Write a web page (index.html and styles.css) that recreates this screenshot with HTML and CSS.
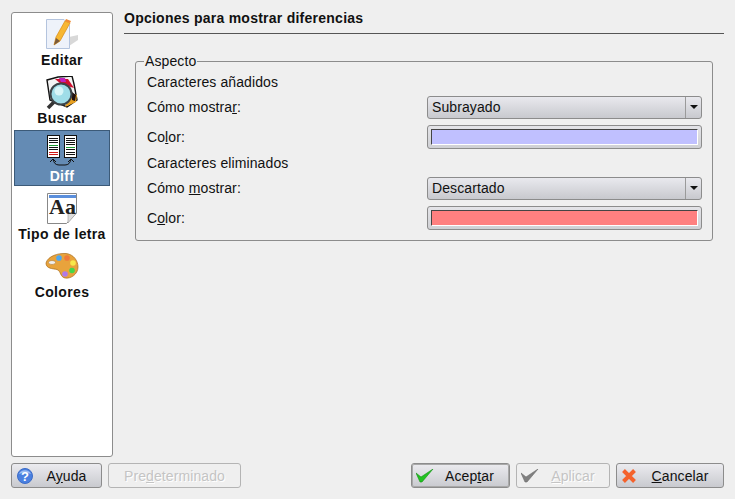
FILE: index.html
```html
<!DOCTYPE html>
<html lang="es">
<head>
  <meta charset="UTF-8" />
  <title>Opciones para mostrar diferencias</title>
  <link rel="stylesheet" href="styles.css">
</head>
<body>
  <div class="window">
    <div class="main">
      <ul class="sidebar">
        <li class="nav-item">
          <svg class="nav-icon" width="34" height="34" viewBox="0 0 34 34">
            <path d="M24 19 L33 17 L33 22 L24 28Z" fill="#d8d8d8"/>
            <path d="M1.500 1.500 H19 L24.500 7 V30.500 H1.500Z" fill="#eef2fa" stroke="#b4c4de"/>
            <path d="M11 19 L20 3 L25 5 L15 23 L9 27Z" fill="#f7b733" stroke="#d98a12" stroke-width=".7"/>
            <path d="M20 3 L21 1 L26 3 L25 5Z" fill="#f08a30"/>
            <path d="M9 27 L11 20 L15 23Z" fill="#7a5a3a"/>
          </svg>
          <span>Editar</span>
        </li>
        <li class="nav-item">
          <svg class="nav-icon" width="34" height="34" viewBox="0 0 34 34">
            <path d="M2 4 L13 1 L27 0 L29 8 L32 24 L22 31 L5 24Z" fill="#f4f4f4" stroke="#111" stroke-width="1.400"/>
            <path d="M10 3 L23 3 L29 12 L16 8Z" fill="#d01030"/>
            <path d="M14 2 L20 2 L21 6 L16 6Z" fill="#c020c0"/>
            <path d="M26 17 L32 19 L31 26 L20 31Z" fill="#e8a020"/>
            <path d="M27 16 L31 19 L30 25 L27 24Z" fill="#201010"/>
            <path d="M10 25 L3 32" stroke="#333" stroke-width="3.500"/>
            <circle cx="16" cy="18" r="10.500" fill="#9fdde8" stroke="#3c4448" stroke-width="2"/>
            <circle cx="14" cy="15" r="4.500" fill="#d8f5f8"/>
          </svg>
          <span>Buscar</span>
        </li>
        <li class="nav-item selected">
          <svg class="nav-icon" width="34" height="34" viewBox="0 0 34 34">
            <rect x="2.500" y="1.500" width="12" height="22" fill="#fff" stroke="#111"/>
            <rect x="19.500" y="1.500" width="12" height="22" fill="#fff" stroke="#111"/>
            <path d="M4 4.500h9M4 6.500h9M4 8.500h9M4 13.500h9M4 15.500h9" stroke="#111"/>
            <path d="M4 11.500h9" stroke="#1a9a30"/>
            <path d="M4 18.500h9M4 20.500h9" stroke="#d01818"/>
            <path d="M21 4.500h9M21 6.500h9M21 8.500h9M21 10.500h9M21 15.500h9M21 18.500h9M21 20.500h9" stroke="#111"/>
            <path d="M21 13.500h9" stroke="#1a9a30"/>
            <path d="M8 25 Q9 31 14 31 H20 Q25 31 26 25 M5 28 L8 25 L11 28 M23 28 L26 25 L29 28" fill="none" stroke="#111"/>
          </svg>
          <span>Diff</span>
        </li>
        <li class="nav-item">
          <svg class="nav-icon" width="34" height="34" viewBox="0 0 34 34">
            <path d="M2.500 1.500 H31.500 V21 L21.500 31.500 H2.500Z" fill="#fff" stroke="#888"/>
            <rect x="4" y="3" width="27" height="3" fill="#5b8fdc"/>
            <path d="M31.500 21 H23 V31Z" fill="#ddd" stroke="#999" stroke-width=".6"/>
            <text class="icon-letters" x="4" y="22">Aa</text>
          </svg>
          <span>Tipo de letra</span>
        </li>
        <li class="nav-item">
          <svg class="nav-icon" width="34" height="34" viewBox="0 0 34 34">
            <path d="M1 13 C3 6 13 3 21 3.500 C29 4.500 33 11 33 17 C33 24 26 29 20 28 C15 27 16 21 12 19.500 C8 18.500 1 19 1 13Z" fill="#e8a33c" stroke="#a86a18" stroke-width=".7"/>
            <ellipse cx="7" cy="12.500" rx="3.500" ry="2" fill="#efefef" stroke="#a86a18" stroke-width=".5"/>
            <circle cx="14" cy="8" r="2.800" fill="#4fa8f0"/>
            <circle cx="22" cy="8" r="2.800" fill="#ef7a3a"/>
            <circle cx="28" cy="13" r="2.800" fill="#f7e84a"/>
            <circle cx="27" cy="20.500" r="2.800" fill="#44d84a"/>
            <circle cx="20" cy="24" r="2.800" fill="#b07ae8"/>
          </svg>
          <span>Colores</span>
        </li>
      </ul>

      <div class="content">
        <h1 class="page-title">Opciones para mostrar diferencias</h1>
        <fieldset class="group">
          <legend>Aspecto</legend>
          <div class="section-title">Caracteres añadidos</div>
          <div class="form-row">
            <label class="combo-label">Cómo mostra<u>r</u>:</label>
            <div class="combo"><span class="combo-value">Subrayado</span><span class="combo-arrow"></span></div>
          </div>
          <div class="form-row">
            <label>Co<u>l</u>or:</label>
            <div class="color-button"><div class="swatch swatch-blue"></div></div>
          </div>
          <div class="section-title section-second">Caracteres eliminados</div>
          <div class="form-row">
            <label class="combo-label">Cómo <u>m</u>ostrar:</label>
            <div class="combo"><span class="combo-value">Descartado</span><span class="combo-arrow"></span></div>
          </div>
          <div class="form-row">
            <label>C<u>o</u>lor:</label>
            <div class="color-button"><div class="swatch swatch-red"></div></div>
          </div>
        </fieldset>
      </div>
    </div>

    <div class="footer">
      <button class="btn btn-help" type="button">
        <svg width="18" height="18" viewBox="0 0 18 18">
          <circle cx="9" cy="9" r="7.500" fill="#4a80e0" stroke="#3c6cc8"/>
          <path d="M3 7 A6.500 6 0 0 1 15 7 Q9 4.500 3 7Z" fill="#9dbdf2"/>
          <text class="help-mark" x="9" y="13.500">?</text>
        </svg>
        <span>A<u>y</u>uda</span>
      </button>
      <button class="btn btn-default" type="button" disabled><span>Pre<u>d</u>eterminado</span></button>
      <div class="spacer"></div>
      <button class="btn btn-ok" type="button">
        <svg width="18" height="14" viewBox="0 0 18 14"><path d="M0 4 L5 8 L17 0 L6 13 L4 13Z" fill="#22c322" stroke="#129012" stroke-width=".6"/></svg>
        <span>Acep<u>t</u>ar</span>
      </button>
      <button class="btn btn-apply" type="button" disabled>
        <svg width="18" height="14" viewBox="0 0 18 14"><path d="M0 4 L5 8 L17 0 L6 13 L4 13Z" fill="#808080" stroke="#6c6c6c" stroke-width=".6"/></svg>
        <span><u>A</u>plicar</span>
      </button>
      <button class="btn btn-cancel" type="button">
        <svg width="16" height="16" viewBox="0 0 16 16"><path d="M2.500 2.500 L13.500 13.500 M13.500 2.500 L2.500 13.500" stroke="#f4622c" stroke-width="4"/></svg>
        <span><u>C</u>ancelar</span>
      </button>
    </div>
  </div>
</body>
</html>
```

FILE: styles.css
```css
html, body {
  margin: 0;
  height: 100%;
  overflow: hidden;
}

body {
  font-family: "Liberation Sans", Arial, sans-serif;
  font-size: 14px;
  letter-spacing: .1px;
  background-color: #efefef;
  color: #111;
}

.window {
  display: flex;
  flex-direction: column;
  height: 499px;
  padding: 12px 11px 11px;
  box-sizing: border-box;
}

.main {
  display: flex;
  flex: 1;
  min-height: 0;
}

.sidebar {
  width: 102px;
  box-sizing: border-box;
  height: 445px;
  margin: 0;
  padding: 2px;
  list-style: none;
  background-color: #fff;
  border: 1px solid #8c8c8c;
  border-radius: 3px;
}

.nav-item {
  display: flex;
  flex-direction: column;
  align-items: center;
  height: 58px;
  box-sizing: border-box;
  padding-top: 3px;
  font-weight: bold;
  line-height: 17px;
  letter-spacing: .35px;
}

.nav-icon {
  display: block;
  flex: none;
}

.selected {
  background-color: #648bb4;
  border: 1px solid #3c5a78;
  color: #fff;
  padding-top: 3px;
  height: 56px;
  margin: -1px 0 3px;
}

.icon-letters {
  font-family: "Liberation Serif", serif;
  font-size: 22px;
  letter-spacing: 0;
  fill: #222;
}

.content {
  flex: 1;
  margin-left: 11px;
}

.page-title {
  margin: 0;
  height: 21px;
  font-size: 14px;
  line-height: 13px;
  letter-spacing: .25px;
  border-bottom: 1px solid #555;
}

.group {
  margin: 19px 11px 0;
  height: 188px;
  box-sizing: border-box;
  padding: 4px 10px 0 11px;
  border: 1px solid #8c8c8c;
  border-radius: 3px;
}

.group legend {
  padding: 0 1px;
  margin-left: -3px;
  line-height: 16px;
}

.section-title {
  height: 23px;
  line-height: 18px;
}

.section-second {
  height: 22px;
  margin-top: 3px;
  line-height: 16px;
}

.form-row {
  display: flex;
  align-items: center;
  justify-content: space-between;
  margin-bottom: 6px;
}

.combo-label {
  margin-bottom: 2px;
}

.combo {
  display: flex;
  width: 275px;
  height: 23px;
  box-sizing: border-box;
  border: 1px solid #8c8c8c;
  border-radius: 3px;
  background: linear-gradient(#e9e9ee, #c8c9ce);
}

.combo-value {
  flex: 1;
  padding-left: 4px;
  line-height: 20px;
}

.combo-arrow {
  width: 15px;
  border-left: 1px solid #9a9a9a;
  position: relative;
}

.combo-arrow::after {
  content: "";
  position: absolute;
  left: 4px;
  top: 8px;
  border-left: 4px solid transparent;
  border-right: 4px solid transparent;
  border-top: 4px solid #111;
}

.color-button {
  width: 275px;
  height: 24px;
  box-sizing: border-box;
  padding: 3px;
  border: 1px solid #8c8c8c;
  border-radius: 3px;
  background: linear-gradient(#e4e4e8, #cfd0d4);
}

.swatch {
  height: 100%;
  box-sizing: border-box;
  border-top: 1px solid #444;
  border-left: 1px solid #444;
  border-right: 1px solid #fff;
  border-bottom: 1px solid #fff;
}

.swatch-blue {
  background-color: #c0c0ff;
}

.swatch-red {
  background-color: #ff8080;
}

.footer {
  display: flex;
  align-items: center;
  height: 25px;
  gap: 6px;
  margin-bottom: 0;
}

.spacer {
  flex: 1;
}

.btn {
  display: flex;
  align-items: center;
  height: 25px;
  box-sizing: border-box;
  padding: 0 0 0 4px;
  font-family: inherit;
  font-size: 14px;
  letter-spacing: .1px;
  color: #111;
  border: 1px solid #8c8c8c;
  border-radius: 3px;
  background: linear-gradient(#ebebef, #c9cacf);
}

.btn span {
  flex: 1;
  text-align: center;
}

.btn[disabled] {
  color: #c4c4c4;
  background: #efefef;
  border-color: #b4b4b4;
  text-shadow: 1px 1px 0 #fff;
}

.btn-help {
  width: 91px;
  padding-right: 2px;
}

.btn-default {
  width: 133px;
  padding: 0;
}

.btn-ok {
  width: 99px;
  padding-right: 4px;
  outline: 1px solid #a8a8a8;
  outline-offset: -2px;
}

.btn-apply {
  width: 94px;
  padding-right: 2px;
}

.btn-cancel {
  width: 108px;
}

.help-mark {
  font-family: "Liberation Sans", sans-serif;
  font-size: 13px;
  font-weight: bold;
  fill: #fff;
  text-anchor: middle;
}
```
